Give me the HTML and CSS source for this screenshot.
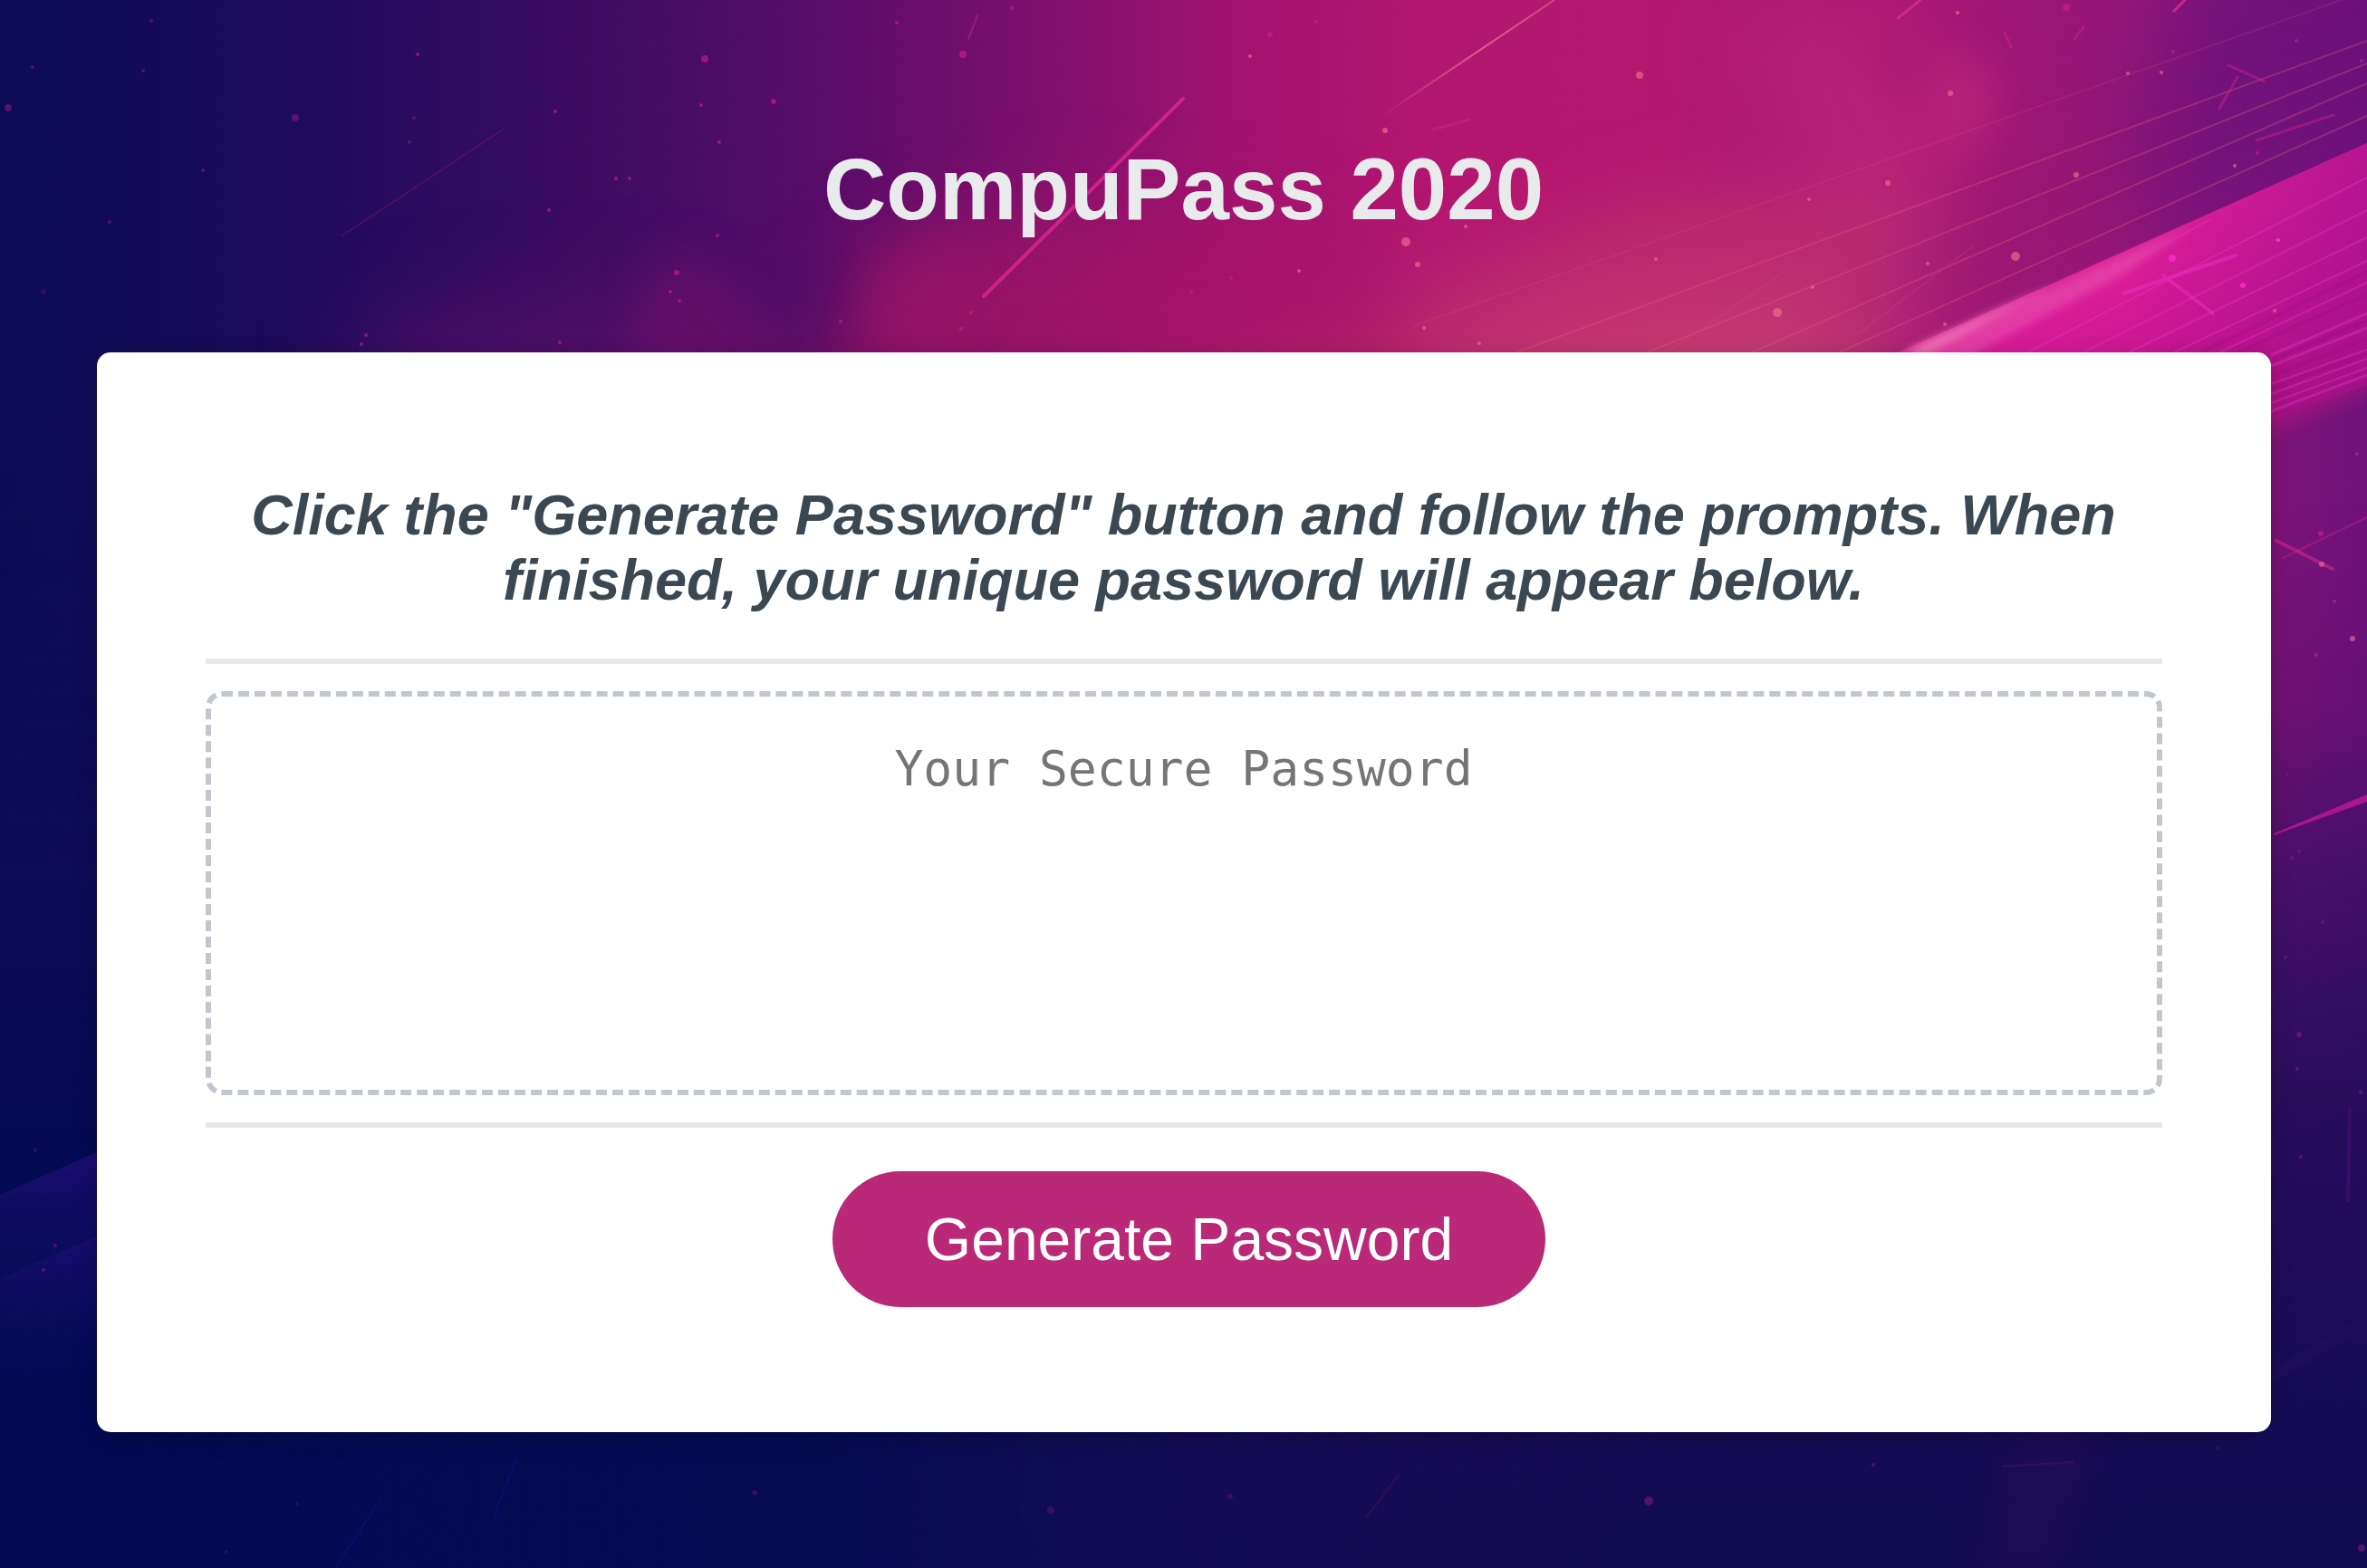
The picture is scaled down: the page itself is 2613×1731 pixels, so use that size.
FILE: index.html
```html
<!DOCTYPE html>
<html lang="en">
<head>
<meta charset="utf-8">
<meta name="viewport" content="width=device-width, initial-scale=1">
<title>CompuPass 2020</title>
<link rel="stylesheet" href="styles.css">
</head>
<body>
<svg class="backdrop" viewBox="0 0 2613 1731" preserveAspectRatio="xMidYMid slice" aria-hidden="true">
  <defs>
    <linearGradient id="sky">
      <stop offset="0" stop-color="#0c0c54"/><stop offset=".11" stop-color="#1b0c5b"/>
      <stop offset=".23" stop-color="#380c60"/><stop offset=".35" stop-color="#590d69"/>
      <stop offset=".46" stop-color="#87106f"/><stop offset=".52" stop-color="#a01370"/>
      <stop offset=".6" stop-color="#b31670"/>
      <stop offset=".7" stop-color="#b5186f"/><stop offset=".8" stop-color="#a81877"/>
      <stop offset=".9" stop-color="#931678"/><stop offset="1" stop-color="#701279"/>
    </linearGradient>
    <linearGradient id="dusk" x2="0" y2="1">
      <stop offset="0" stop-color="#0f0c54" stop-opacity="0"/><stop offset=".32" stop-color="#250d5a" stop-opacity="0"/>
      <stop offset=".45" stop-color="#250d5a" stop-opacity=".15"/><stop offset=".56" stop-color="#250d5c" stop-opacity=".6"/>
      <stop offset=".7" stop-color="#240e5a" stop-opacity=".95"/><stop offset=".9" stop-color="#160c56"/>
      <stop offset="1" stop-color="#100c50"/>
    </linearGradient>
    <linearGradient id="west">
      <stop offset="0" stop-color="#030a52"/><stop offset=".35" stop-color="#060b50"/>
      <stop offset=".55" stop-color="#160c56" stop-opacity=".6"/><stop offset=".7" stop-color="#230e58" stop-opacity="0"/>
    </linearGradient>
    <linearGradient id="westFade" x2="0" y2="1">
      <stop offset=".3" stop-color="#000"/><stop offset=".75" stop-color="#fff"/>
    </linearGradient>
    <mask id="low"><rect width="2613" height="1731" fill="url(#westFade)"/></mask>
    <linearGradient id="beam" gradientUnits="userSpaceOnUse" x1="2260" y1="260" x2="2390" y2="550">
      <stop offset="0" stop-color="#e332a0"/><stop offset=".2" stop-color="#dc1e98"/>
      <stop offset=".6" stop-color="#c51490"/><stop offset=".88" stop-color="#a8147e"/>
      <stop offset="1" stop-color="#93147a" stop-opacity="0"/>
    </linearGradient>
    <linearGradient id="beamShade" gradientUnits="userSpaceOnUse" x1="2350" y1="0" x2="2613" y2="0">
      <stop offset="0" stop-color="#a8108c" stop-opacity="0"/><stop offset="1" stop-color="#a8108c" stop-opacity=".7"/>
    </linearGradient>
    <linearGradient id="ray" x1="0" y1="0" x2="0" y2="1">
      <stop offset="0" stop-color="#1d0d70"/><stop offset="1" stop-color="#080a62" stop-opacity="0"/>
    </linearGradient>
    <linearGradient id="comet" x1="0" y1="1" x2="1" y2="0">
      <stop offset="0" stop-color="#f0708c" stop-opacity="0"/><stop offset=".6" stop-color="#f0708c" stop-opacity=".8"/>
      <stop offset="1" stop-color="#f0708c" stop-opacity=".5"/>
    </linearGradient>
    <filter id="soft" filterUnits="userSpaceOnUse" x="-200" y="-200" width="3100" height="2200" color-interpolation-filters="sRGB"><feGaussianBlur stdDeviation="48"/></filter>
    <filter id="haze" filterUnits="userSpaceOnUse" x="-200" y="-200" width="3100" height="2200" color-interpolation-filters="sRGB"><feGaussianBlur stdDeviation="24"/></filter>
    <filter id="edge" filterUnits="userSpaceOnUse" x="2000" y="200" width="613" height="300" color-interpolation-filters="sRGB"><feGaussianBlur stdDeviation="5"/></filter>
  </defs>
  <rect width="2613" height="1731" fill="url(#sky)"/>
  <g filter="url(#soft)">
    <path d="M1300 440 1550 330 1780 240 2120 190 2160 300 2080 440 1800 520 1300 520Z" fill="#c8406f" opacity=".5"/>
    <path d="M1560 440 1740 360 2000 330 2080 420 1900 500Z" fill="#cc5574" opacity=".4"/>
    <path d="M360 450 430 350 720 320 900 430Z" fill="#611069" opacity=".55"/>
    <path d="M960 280 1200 220 1450 260 1600 420 900 460Z" fill="#a81664" opacity=".65"/>
    <path d="M1900 40 2090 0 2180 140 2130 230 2000 160Z" fill="#c42a76" opacity=".55"/>
    <path d="M2430-60H2700V150L2390 270 2350 180Z" fill="#68117a" opacity=".6"/>
    <path d="M2130 260 2300 170 2370 190 2200 310 2050 370Z" fill="#94176f" opacity=".6"/>
  </g>
  <g filter="url(#haze)">
    <path d="M690 410 720 300 750 275 830 330 900 410Z" fill="#731069" opacity=".5"/>
    <path d="M930 260 920 330 880 390 810 340 860 300Z" fill="#4c0c64" opacity=".5"/>
    <path d="M2050 30 2110 50 2140 100 2090 110Z" fill="#9f1673" opacity=".6"/>
    <path d="M2130 80 2190 60 2200 140 2150 170Z" fill="#c22d7b" opacity=".5"/>
    <path d="M950 300 1060 240 1080 330 980 400Z" fill="#9a136a" opacity=".4"/>
    <path d="M1130 250 1210 230 1190 290 1140 320Z" fill="#95136b" opacity=".4"/>
  </g>
  <path d="M2095 389 2613 158V500L2050 750Z" fill="url(#beam)"/>
  <path d="M2095 389 2613 158V425L2507 465 2050 620Z" fill="url(#beamShade)"/>
  <path d="M2110 388 2300 302 2420 250 2340 305 2160 400Z" fill="#ec62b4" opacity=".45" filter="url(#edge)"/>
  <path d="M2100 389 2270 312 2200 350 2125 392Z" fill="#f4a0c0" opacity=".6" filter="url(#edge)"/>
  <g fill="none" stroke="#ee38c4" stroke-width="2" opacity=".35">
    <path d="M2175 389 2440 242M2238 389 2613 196M2300 389 2613 232M2350 389 2613 262M2400 389 2613 288M2450 389 2613 312"/>
    <path d="M2507 424 2613 386M2507 435 2613 396M2507 445 2613 406"/>
    <path d="M2507 392 2613 346M2507 404 2613 362M2507 454 2613 414" stroke-width="3"/>
  </g>
  <g fill="none" stroke="#8e0e7c" stroke-width="4" opacity=".25">
    <path d="M2430 389 2613 300M2470 389 2613 325M2507 398 2613 354M2507 415 2613 374M2507 429 2613 390"/>
  </g>
  <g fill="none" stroke="#e8607a" stroke-width="2" opacity=".3">
    <path d="M1674 389 2613 45M1818 389 2613 70M1934 389 2613 92M2030 389 2613 128"/>
    <path d="M1840 389 1970 300M1560 360 2613-10M2050 370 2180 270" opacity=".5"/>
  </g>
  <g fill="none" stroke="#e02a90" stroke-linecap="round">
    <path d="M1306 109 1086 327" stroke-width="4" opacity=".75"/>
    <path d="M2120 0 2095 20M2412 0 2400 12" stroke-width="3" opacity=".8"/>
    <path d="M2460 72 2500 90M2491 155 2576 127M2300 30 2290 43M2213 36 2220 52M2470 85 2450 120M1582 143 1622 132" stroke-width="3" opacity=".35"/>
    <path d="M1079 17 1069 43" stroke-width="2" opacity=".4"/>
    <path d="M2388 304 2443 346M2468 282 2390 308 2345 324" stroke="#ee30c4" stroke-width="4" opacity=".5"/>
    <path d="M555 143 378 260" stroke="#8a1870" stroke-width="2" opacity=".35"/>
    <path d="M2513 597 2575 628" stroke-width="4" opacity=".55"/>
    <path d="M2613 571 2520 616" stroke-width="2" opacity=".35"/>
  </g>
  <path d="M1518 133 1716 0" stroke="url(#comet)" stroke-width="2"/>
  <rect width="2613" height="1731" fill="url(#dusk)"/>
  <rect width="2613" height="1731" fill="url(#west)" mask="url(#low)"/>
  <path d="M2160 1760 2230 1560H2320L2280 1760Z" fill="#350f5c" opacity=".3" filter="url(#haze)"/>
  <path d="M0 1319 107 1272V1440L0 1480Z" fill="url(#ray)"/>
  <path d="M0 1412 107 1364V1500L0 1530Z" fill="url(#ray)" opacity=".8"/>
  <path d="M2510 921 2613 884V878L2518 918Z" fill="#a8178c" stroke="#a8178c" stroke-width="2"/>
  <path d="M2594 1223 2592 1326" stroke="#3a0e68" stroke-width="4"/>
  <path d="M2507 1512 2585 1465 2613 1454V1466L2507 1528Z" fill="#2a0f5c" opacity=".3"/>
  <g fill="none" stroke="#6a1468" stroke-width="2" opacity=".35">
    <path d="M2210 1619 2290 1614M1508 1676 1545 1627"/>
    <path d="M370 1731 420 1655M545 1675 570 1610" stroke="#1414a0"/>
  </g>
  <g fill="#d41e86" opacity=".6">
    <circle cx="778" cy="65" r="4"/><circle cx="1063" cy="60" r="4"/><circle cx="990" cy="25" r="2"/><circle cx="1117" cy="9" r="2"/>
    <circle cx="854" cy="112" r="3"/><circle cx="774" cy="116" r="2"/><circle cx="794" cy="157" r="2"/><circle cx="613" cy="123" r="2"/>
    <circle cx="461" cy="60" r="2"/><circle cx="747" cy="301" r="3"/><circle cx="740" cy="322" r="2"/><circle cx="750" cy="332" r="2"/>
    <circle cx="680" cy="197" r="2"/><circle cx="695" cy="197" r="2"/><circle cx="606" cy="232" r="2"/><circle cx="792" cy="260" r="2"/>
    <circle cx="928" cy="355" r="2"/><circle cx="1072" cy="345" r="2"/><circle cx="1061" cy="363" r="2"/><circle cx="1315" cy="322" r="2"/>
    <circle cx="1402" cy="38" r="3"/><circle cx="1453" cy="24" r="2"/><circle cx="1359" cy="307" r="2"/><circle cx="2281" cy="8" r="4"/>
    <circle cx="2399" cy="57" r="2"/><circle cx="2535" cy="45" r="2"/><circle cx="2607" cy="67" r="2"/><circle cx="2492" cy="169" r="2"/>
    <circle cx="2562" cy="589" r="3"/><circle cx="2577" cy="664" r="2"/><circle cx="2557" cy="723" r="2"/><circle cx="2602" cy="501" r="2"/>
    <circle cx="404" cy="370" r="2"/><circle cx="399" cy="380" r="2"/><circle cx="618" cy="378" r="2"/>
  </g>
  <g fill="#f0788e" opacity=".6">
    <circle cx="1810" cy="83" r="4"/><circle cx="1552" cy="267" r="5"/><circle cx="1962" cy="345" r="5"/><circle cx="2225" cy="283" r="5"/>
    <circle cx="1529" cy="144" r="3"/><circle cx="1565" cy="292" r="3"/><circle cx="1618" cy="250" r="2"/><circle cx="1828" cy="286" r="2"/>
    <circle cx="2084" cy="202" r="3"/><circle cx="2153" cy="103" r="3"/><circle cx="2292" cy="193" r="3"/><circle cx="2161" cy="14" r="2"/>
    <circle cx="1997" cy="220" r="2"/><circle cx="2147" cy="358" r="2"/><circle cx="1572" cy="362" r="2"/><circle cx="1633" cy="379" r="2"/>
    <circle cx="2128" cy="291" r="2"/><circle cx="2001" cy="317" r="2"/><circle cx="1434" cy="299" r="2"/><circle cx="1380" cy="62" r="2"/>
    <circle cx="2386" cy="80" r="2"/><circle cx="2349" cy="81" r="2"/><circle cx="2467" cy="183" r="2"/><circle cx="2515" cy="265" r="2"/>
    <circle cx="2511" cy="343" r="2"/><circle cx="2597" cy="705" r="3"/><circle cx="2563" cy="623" r="3"/>
  </g>
  <g fill="#f028c0"><circle cx="2398" cy="285" r="4"/><circle cx="2476" cy="315" r="3"/></g>
  <g fill="#8a1c78" opacity=".55">
    <circle cx="9" cy="119" r="4"/><circle cx="326" cy="130" r="4"/><circle cx="457" cy="130" r="2"/><circle cx="452" cy="157" r="2"/>
    <circle cx="158" cy="78" r="2"/><circle cx="167" cy="23" r="2"/><circle cx="224" cy="188" r="2"/><circle cx="121" cy="245" r="2"/>
    <circle cx="48" cy="322" r="3" opacity=".5"/><circle cx="36" cy="74" r="2"/><circle cx="2525" cy="855" r="2"/><circle cx="2538" cy="940" r="2"/>
    <circle cx="2530" cy="947" r="2"/><circle cx="2564" cy="1018" r="2"/><circle cx="2523" cy="1057" r="2"/><circle cx="2538" cy="1142" r="3"/>
    <circle cx="2536" cy="1180" r="2"/><circle cx="2606" cy="1206" r="2"/><circle cx="2540" cy="1277" r="2"/><circle cx="2607" cy="1709" r="4"/>
    <circle cx="2448" cy="1599" r="2" opacity=".5"/><circle cx="1820" cy="1657" r="5"/><circle cx="1160" cy="1667" r="4" opacity=".6"/>
    <circle cx="1358" cy="1652" r="3" opacity=".6"/><circle cx="833" cy="1648" r="3" opacity=".6"/><circle cx="61" cy="1375" r="2"/>
    <circle cx="48" cy="1402" r="2"/><circle cx="39" cy="1270" r="2" opacity=".6"/><circle cx="328" cy="1660" r="2" opacity=".5"/>
    <circle cx="250" cy="1713" r="2" opacity=".5"/><circle cx="2068" cy="1617" r="2"/>
  </g>
</svg>

<main class="page">
  <h1 class="title">CompuPass 2020</h1>
  <section class="card">
    <h2 class="lead"><label for="password">Click the "Generate Password" button and follow the prompts. When finished, your unique password will appear below.</label></h2>
    <div class="card-body">
      <textarea class="password" id="password" readonly placeholder="Your Secure Password"></textarea>
    </div>
    <div class="card-footer">
      <button class="button" type="button">Generate Password</button>
    </div>
  </section>
</main>
</body>
</html>
```
FILE: styles.css
```css
* {
  box-sizing: border-box;
}

body {
  margin: 0;
  min-height: 100vh;
  background: #0f0c54;
  font-family: Arial, "Liberation Sans", sans-serif;
}

.backdrop {
  position: fixed;
  inset: 0;
  width: 100%;
  height: 100%;
  z-index: -1;
}

.page {
  max-width: 2400px;
  margin: 0 auto;
  padding: 154px 0 150px;
}

.title {
  margin: 0 0 125px;
  color: #e8eaeb;
  font-size: 96px;
  line-height: 110px;
  text-align: center;
}

.card {
  padding: 143px 120px 138px;
  border-radius: 15px;
  background: #fff;
  box-shadow: 0 6px 24px rgba(0, 0, 0, 0.2);
}

.lead {
  margin: 0 0 51px;
  color: #3b4852;
  font-size: 63px;
  font-style: italic;
  line-height: 72px;
  text-align: center;
}

.card-body {
  padding: 30px 0;
  border: solid #e7e8ea;
  border-width: 6px 0;
}

.password {
  display: block;
  width: 100%;
  height: 446px;
  padding: 48px;
  border: 6px dashed #c0c7cf;
  border-radius: 18px;
  background: transparent;
  color: #3b4852;
  font-family: Consolas, "DejaVu Sans Mono", monospace;
  font-size: 53px;
  line-height: 64px;
  text-align: center;
  resize: none;
  overflow: hidden;
}

.password::placeholder {
  color: #757575;
  opacity: 1;
}

.card-footer {
  display: flex;
  justify-content: center;
  padding: 48px 0 0 12px;
}

.button {
  padding: 36px 102px;
  border: 0;
  border-radius: 75px;
  background: #ba2878;
  color: #fff;
  font-family: inherit;
  font-size: 66px;
  line-height: 78px;
  cursor: pointer;
}
```
